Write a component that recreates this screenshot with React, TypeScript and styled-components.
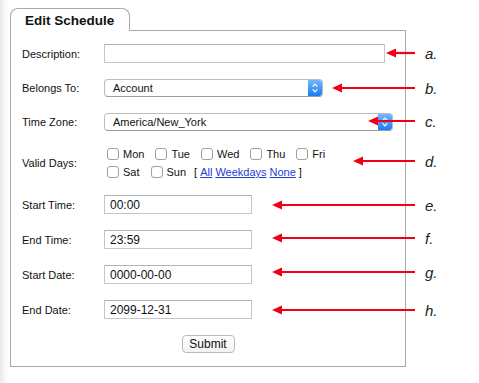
import React from 'react';
import styled, { createGlobalStyle } from 'styled-components';

const GlobalStyle = createGlobalStyle`
    html, body {
        margin: 0;
        padding: 0;
        background: #fff;
    }
    body {
        font-family: "Liberation Sans", Arial, sans-serif;
        color: #111;
    }
`;

const Page = styled.div`
    position: relative;
    width: 479px;
    height: 383px;
    box-sizing: border-box;
    padding: 8px 0 0 10px;
    background: linear-gradient(to right, #e9e9e9 0, #f5f5f5 4px, #fff 9px);
    overflow: hidden;
`;

const Tab = styled.div`
    position: relative;
    z-index: 1;
    width: 120px;
    height: 23px;
    box-sizing: border-box;
    margin-bottom: -1px;
    padding: 4px 0 0 14px;
    border: 1px solid #a9a9a9;
    border-bottom: none;
    border-radius: 8px 8px 0 0;
    background: #fff;
    font-size: 13.5px;
    font-weight: bold;
    color: #111;
`;

const Panel = styled.form`
    width: 396px;
    height: 337px;
    box-sizing: border-box;
    border: 1px solid #a9a9a9;
    padding: 13px 11px 0 11px;
    display: flex;
    flex-direction: column;
    gap: 16px;
    background: #fff;
`;

const Row = styled.div<{ $top?: number; $bottom?: number }>`
    display: flex;
    align-items: center;
    margin-top: ${(p) => p.$top ?? 0}px;
    margin-bottom: ${(p) => p.$bottom ?? 0}px;
`;

const Label = styled.label`
    flex: none;
    width: 82px;
    font-size: 11px;
    color: #111;
`;

const TextInput = styled.input<{ $w: number }>`
    width: ${(p) => p.$w}px;
    height: 19px;
    box-sizing: border-box;
    margin: 0;
    padding: 0 5px;
    border: 1px solid #c6c6c6;
    border-top-color: #b3b3b3;
    font: 12px "Liberation Sans", Arial, sans-serif;
    color: #111;
    outline: none;
`;

const SelectBox = styled.div<{ $w: number }>`
    display: flex;
    width: ${(p) => p.$w}px;
    height: 18px;
    box-sizing: border-box;
    border: 1px solid #bdbdbd;
    border-bottom-color: #9c9c9c;
    border-radius: 4px;
    overflow: hidden;
    background: #fff;
`;

const Select = styled.select`
    flex: 1;
    min-width: 0;
    margin: 0;
    padding: 0 0 0 8px;
    appearance: none;
    border: none;
    background: transparent;
    font: 11px "Liberation Sans", Arial, sans-serif;
    color: #111;
    outline: none;
`;

const Stepper = styled.span`
    flex: none;
    width: 14px;
    display: flex;
    align-items: center;
    justify-content: center;
    background: linear-gradient(#72b8fc, #1b7cf0);
`;

const Days = styled.div`
    display: flex;
    flex-direction: column;
`;

const DayLine = styled.div`
    display: flex;
    align-items: center;
    height: 18px;
    font-size: 11px;
`;

const Day = styled.label`
    display: inline-flex;
    align-items: center;
    margin-right: 8px;
`;

const Check = styled.input.attrs({ type: 'checkbox' })`
    appearance: none;
    width: 12px;
    height: 12px;
    box-sizing: border-box;
    margin: 0 4px 0 3px;
    border: 1px solid #a0a0a0;
    border-radius: 3px;
    background: #fff;
`;

const Shortcuts = styled.span`
    display: inline-flex;
    gap: 3px;
`;

const Link = styled.a`
    color: #1f3cd6;
    text-decoration: underline;
    cursor: pointer;
`;

const ButtonRow = styled.div`
    display: flex;
    justify-content: center;
`;

const SubmitButton = styled.button`
    width: 53px;
    height: 18px;
    box-sizing: border-box;
    padding: 0;
    border: 1px solid #bbb;
    border-radius: 4px;
    background: linear-gradient(#fff, #f2f2f2);
    font: 12px "Liberation Sans", Arial, sans-serif;
    color: #111;
`;

const Callout = styled.div<{ $x: number; $y: number }>`
    position: absolute;
    left: ${(p) => p.$x}px;
    top: ${(p) => p.$y - 10}px;
    height: 20px;
    display: flex;
    align-items: center;
`;

const Letter = styled.span`
    margin-left: 10px;
    font: italic 15px "Liberation Sans", Arial, sans-serif;
    color: #222;
`;

const Chevrons = () => (
    <svg width="8" height="12" viewBox="0 0 8 12">
        <path
            d="M1.6 4.6 L4 2.2 L6.4 4.6 M1.6 7.4 L4 9.8 L6.4 7.4"
            fill="none"
            stroke="#fff"
            strokeWidth="1.2"
        />
    </svg>
);

const Arrow = ({ length }: { length: number }) => (
    <svg width={length} height="10" viewBox={`0 0 ${length} 10`}>
        <line x1="8" y1="5" x2={length} y2="5" stroke="#f00018" strokeWidth="2.2" />
        <polygon points="0,5 10,0.5 10,9.5" fill="#f00018" />
    </svg>
);

const ARROW_END = 415;

const callouts = [
    { letter: 'a.', x: 386, y: 53 },
    { letter: 'b.', x: 332, y: 88 },
    { letter: 'c.', x: 368, y: 121 },
    { letter: 'd.', x: 353, y: 161 },
    { letter: 'e.', x: 272, y: 205 },
    { letter: 'f.', x: 272, y: 238 },
    { letter: 'g.', x: 272, y: 272 },
    { letter: 'h.', x: 272, y: 310 }
];

const weekTop = ['Mon', 'Tue', 'Wed', 'Thu', 'Fri'];
const weekEnd = ['Sat', 'Sun'];

export default function App() {
    return (
        <>
            <GlobalStyle />
            <Page>
                <Tab>Edit Schedule</Tab>
                <Panel onSubmit={(e) => e.preventDefault()}>
                    <Row>
                        <Label>Description:</Label>
                        <TextInput $w={281} defaultValue="" />
                    </Row>
                    <Row>
                        <Label>Belongs To:</Label>
                        <SelectBox $w={219}>
                            <Select defaultValue="Account">
                                <option>Account</option>
                            </Select>
                            <Stepper>
                                <Chevrons />
                            </Stepper>
                        </SelectBox>
                    </Row>
                    <Row>
                        <Label>Time Zone:</Label>
                        <SelectBox $w={289}>
                            <Select defaultValue="America/New_York">
                                <option>America/New_York</option>
                            </Select>
                            <Stepper>
                                <Chevrons />
                            </Stepper>
                        </SelectBox>
                    </Row>
                    <Row $top={-2} $bottom={-2}>
                        <Label>Valid Days:</Label>
                        <Days>
                            <DayLine>
                                {weekTop.map((d) => (
                                    <Day key={d}>
                                        <Check />
                                        {d}
                                    </Day>
                                ))}
                            </DayLine>
                            <DayLine>
                                {weekEnd.map((d) => (
                                    <Day key={d}>
                                        <Check />
                                        {d}
                                    </Day>
                                ))}
                                <Shortcuts>
                                    [ <Link>All</Link>
                                    <Link>Weekdays</Link>
                                    <Link>None</Link> ]
                                </Shortcuts>
                            </DayLine>
                        </Days>
                    </Row>
                    <Row>
                        <Label>Start Time:</Label>
                        <TextInput $w={148} defaultValue="00:00" />
                    </Row>
                    <Row>
                        <Label>End Time:</Label>
                        <TextInput $w={148} defaultValue="23:59" />
                    </Row>
                    <Row>
                        <Label>Start Date:</Label>
                        <TextInput $w={148} defaultValue="0000-00-00" />
                    </Row>
                    <Row>
                        <Label>End Date:</Label>
                        <TextInput $w={148} defaultValue="2099-12-31" />
                    </Row>
                    <ButtonRow>
                        <SubmitButton type="submit">Submit</SubmitButton>
                    </ButtonRow>
                </Panel>
                {callouts.map((c) => (
                    <Callout key={c.letter} $x={c.x} $y={c.y}>
                        <Arrow length={ARROW_END - c.x} />
                        <Letter>{c.letter}</Letter>
                    </Callout>
                ))}
            </Page>
        </>
    );
}
